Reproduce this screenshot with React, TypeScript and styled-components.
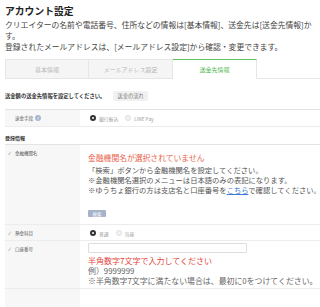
import styled, { createGlobalStyle } from 'styled-components';

const GlobalStyle = createGlobalStyle`
  html, body {
    margin: 0;
    padding: 0;
    background: #ffffff;
  }
  body {
    font-family: 'Noto Sans CJK JP', 'Noto Sans', sans-serif;
    color: #333333;
    width: 320px;
    height: 307px;
    overflow: hidden;
  }
`;

type Tab = { label: string; active?: boolean };

const tabs: Tab[] = [{ label: '基本情報' }, { label: 'メールアドレス設定' }, { label: '送金先情報', active: true }];

export default function App() {
  return (
    <S.Page>
      <GlobalStyle />
      <S.Title>アカウント設定</S.Title>
      <S.Description>
        <S.Line>クリエイターの名前や電話番号、住所などの情報は[基本情報]、送金先は[送金先情報]か</S.Line>
        <S.Line>す。</S.Line>
        <S.Line>登録されたメールアドレスは、[メールアドレス設定]から確認・変更できます。</S.Line>
      </S.Description>

      <S.Tabs>
        {tabs.map((tab) => (
          <S.TabItem key={tab.label} $active={tab.active}>
            {tab.label}
          </S.TabItem>
        ))}
        <S.TabRest />
      </S.Tabs>

      <S.Notice>
        <S.NoticeText>送金額の送金先情報を設定してください。</S.NoticeText>
        <S.FlowButton type='button'>送金の流れ</S.FlowButton>
      </S.Notice>

      <S.Table $gap={8}>
        <S.Row>
          <S.Label>
            送金手段
            <S.InfoIcon>?</S.InfoIcon>
          </S.Label>
          <S.Field $pad='3px 0 3px 8px'>
            <S.RadioGroup>
              <S.RadioItem>
                <S.Radio $checked />
                銀行振込
              </S.RadioItem>
              <S.RadioItem>
                <S.Radio />
                LINE Pay
              </S.RadioItem>
            </S.RadioGroup>
          </S.Field>
        </S.Row>
      </S.Table>

      <S.SectionTitle>登録情報</S.SectionTitle>

      <S.Table $gap={2}>
        <S.Row>
          <S.Label $required>金融機関名</S.Label>
          <S.Field $pad='7px 0 7px 8px'>
            <S.ErrorTitle>金融機関名が選択されていません</S.ErrorTitle>
            <S.HelpText>「検索」ボタンから金融機関名を設定してください。</S.HelpText>
            <S.HelpText>※金融機関名選択のメニューは日本語のみの表記になります。</S.HelpText>
            <S.HelpText>
              ※ゆうちょ銀行の方は支店名と口座番号を<S.Link>こちら</S.Link>で確認してください。
            </S.HelpText>
            <S.SearchButton type='button'>検索</S.SearchButton>
          </S.Field>
        </S.Row>
        <S.Row>
          <S.Label $required>預金科目</S.Label>
          <S.Field $pad='3px 0 2px 8px'>
            <S.RadioGroup>
              <S.RadioItem>
                <S.Radio $checked />
                普通
              </S.RadioItem>
              <S.RadioItem>
                <S.Radio />
                当座
              </S.RadioItem>
            </S.RadioGroup>
          </S.Field>
        </S.Row>
        <S.Row>
          <S.Label $required>口座番号</S.Label>
          <S.Field $pad='2px 0 2px 8px'>
            <S.Input type='text' />
            <S.ErrorText>半角数字7文字で入力してください</S.ErrorText>
            <S.NoteText>例）9999999</S.NoteText>
            <S.NoteText>※半角数字7文字に満たない場合は、最初に0をつけてください。</S.NoteText>
          </S.Field>
        </S.Row>
        <S.Row>
          <S.Label />
          <S.Field $pad='0 0 0 8px' $tall />
        </S.Row>
      </S.Table>
    </S.Page>
  );
}

const S = {
  Page: styled.div`
    padding: 5px 0 0 5px;
    overflow: hidden;
  `,

  Title: styled.h1`
    margin: 0;
    font-size: 9.8px;
    line-height: 13px;
    font-weight: 700;
    color: #222222;
  `,

  Description: styled.div`
    margin-top: 1px;
    font-size: 7.8px;
    line-height: 11px;
    color: #444444;
  `,

  Line: styled.span`
    display: block;
    white-space: nowrap;
  `,

  Tabs: styled.div`
    display: flex;
    margin-top: 7px;
    height: 20px;
  `,

  TabItem: styled.div<{ $active?: boolean }>`
    width: 84px;
    display: flex;
    align-items: center;
    justify-content: center;
    font-size: 6px;
    box-sizing: border-box;
    color: ${({ $active }) => ($active ? '#53b853' : '#b5b5b5')};
    background: ${({ $active }) => ($active ? '#ffffff' : '#f5f5f5')};
    border: 1px solid #e6e6e6;
    border-left-width: 0;
    border-top: 1px solid ${({ $active }) => ($active ? '#5cc25c' : '#e6e6e6')};
    border-bottom: 1px solid ${({ $active }) => ($active ? '#ffffff' : '#e6e6e6')};

    &:first-child {
      border-left-width: 1px;
    }
  `,

  TabRest: styled.div`
    flex: 1;
    border-bottom: 1px solid #e6e6e6;
  `,

  Notice: styled.div`
    display: flex;
    align-items: center;
    gap: 8px;
    margin-top: 12px;
  `,

  NoticeText: styled.p`
    margin: 0;
    font-size: 5.3px;
    font-weight: 700;
    color: #333333;
  `,

  FlowButton: styled.button`
    font-family: inherit;
    font-size: 5.3px;
    color: #777777;
    background: #f1f1f1;
    border: none;
    border-radius: 2px;
    padding: 0 4px;
    height: 10px;
  `,

  Table: styled.div<{ $gap: number }>`
    margin-top: ${({ $gap }) => $gap}px;
    border-top: 1px solid #e3e3e3;
  `,

  Row: styled.div`
    display: grid;
    grid-template-columns: 75px 1fr;
    border-bottom: 1px solid #ececec;
  `,

  Label: styled.div<{ $required?: boolean }>`
    background: #f7f7f7;
    font-size: 4.5px;
    line-height: 8px;
    color: #555555;
    padding: 4px 0 0 ${({ $required }) => ($required ? '3px' : '10px')};
    display: flex;
    align-items: flex-start;
    gap: 2px;

    &::before {
      content: ${({ $required }) => ($required ? "'✓'" : 'none')};
      margin-right: 2px;
      color: #888888;
    }
  `,

  InfoIcon: styled.span`
    width: 6px;
    height: 6px;
    margin-top: 1px;
    border-radius: 50%;
    background: #a9b8cf;
    color: #ffffff;
    font-size: 4px;
    line-height: 6px;
    text-align: center;
  `,

  Field: styled.div<{ $pad: string; $tall?: boolean }>`
    padding: ${({ $pad }) => $pad};
    min-height: ${({ $tall }) => ($tall ? '24px' : '8px')};
    overflow: hidden;
  `,

  RadioGroup: styled.div`
    display: flex;
    align-items: center;
    gap: 7px;
    padding-left: 2px;
    height: 10px;
  `,

  RadioItem: styled.label`
    display: flex;
    align-items: center;
    gap: 3px;
    font-size: 4.8px;
    color: #999999;
  `,

  Radio: styled.span<{ $checked?: boolean }>`
    width: 6px;
    height: 6px;
    box-sizing: border-box;
    border-radius: 50%;
    border: ${({ $checked }) => ($checked ? '2px solid #333333' : '1px solid #e0e0e0')};
    background: ${({ $checked }) => ($checked ? '#ffffff' : '#f2f2f2')};
  `,

  SectionTitle: styled.h2`
    margin: 7px 0 0;
    font-size: 5px;
    line-height: 8px;
    font-weight: 700;
    color: #333333;
  `,

  ErrorTitle: styled.p`
    margin: 0 0 1px;
    font-size: 7.8px;
    line-height: 12px;
    color: #e8644c;
  `,

  HelpText: styled.p`
    margin: 0;
    font-size: 7.3px;
    line-height: 10px;
    color: #555555;
    white-space: nowrap;
  `,

  NoteText: styled.p`
    margin: 0;
    font-size: 7.9px;
    line-height: 10px;
    color: #666666;
    white-space: nowrap;
  `,

  Link: styled.span`
    color: #3b78d0;
    text-decoration: underline;
  `,

  SearchButton: styled.button`
    display: block;
    margin-top: 15px;
    font-family: inherit;
    font-size: 4.5px;
    color: #ffffff;
    background: #a6b3ca;
    border: none;
    border-radius: 1px;
    width: 18px;
    height: 7px;
    padding: 0;
  `,

  Input: styled.input`
    display: block;
    width: 159px;
    height: 10px;
    box-sizing: border-box;
    border: 1px solid #dddddd;
    border-radius: 1px;
    margin: 0;
  `,

  ErrorText: styled.p`
    margin: 3px 0 0;
    font-size: 8px;
    line-height: 10px;
    color: #e2473a;
  `,
};
